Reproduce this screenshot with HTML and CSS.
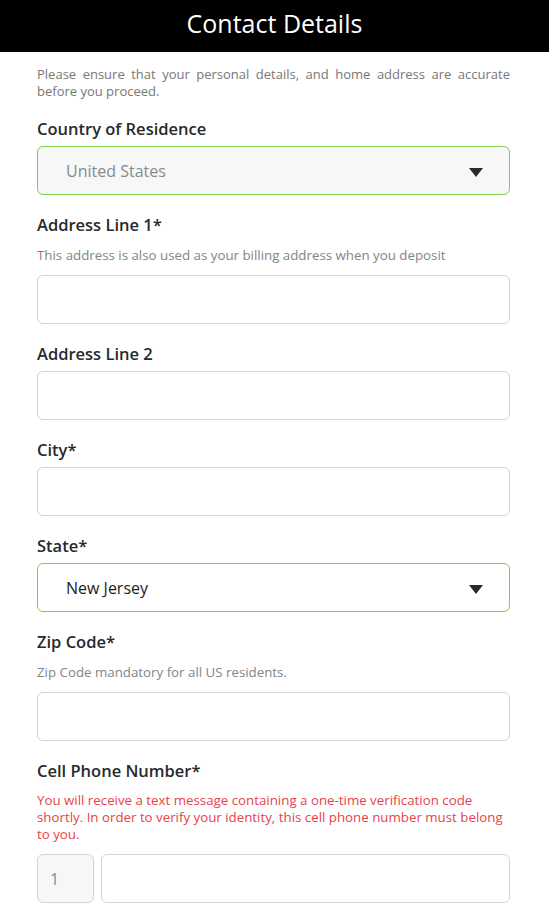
FILE: index.html
```html
<!DOCTYPE html>
<html lang="en">
<head>
  <meta charset="UTF-8" />
  <meta name="viewport" content="width=device-width, initial-scale=1.0" />
  <title>Contact Details</title>
  <link rel="stylesheet" href="styles.css">
</head>
<body>
  <header class="top-bar">
    <h1>Contact Details</h1>
  </header>

  <form class="contact-form">
    <p class="intro">Please ensure that your personal details, and home address are accurate before you proceed.</p>

    <div class="field">
      <label class="field-label">Country of Residence</label>
      <div class="select-box is-valid is-disabled">
        <span class="select-value">United States</span>
        <span class="caret"></span>
      </div>
    </div>

    <div class="field">
      <label class="field-label">Address Line 1*</label>
      <p class="hint">This address is also used as your billing address when you deposit</p>
      <input class="text-input" type="text" />
    </div>

    <div class="field">
      <label class="field-label">Address Line 2</label>
      <input class="text-input" type="text" />
    </div>

    <div class="field">
      <label class="field-label">City*</label>
      <input class="text-input" type="text" />
    </div>

    <div class="field">
      <label class="field-label">State*</label>
      <div class="select-box is-valid">
        <span class="select-value">New Jersey</span>
        <span class="caret"></span>
      </div>
    </div>

    <div class="field">
      <label class="field-label">Zip Code*</label>
      <p class="hint">Zip Code mandatory for all US residents.</p>
      <input class="text-input" type="text" />
    </div>

    <div class="field">
      <label class="field-label">Cell Phone Number*</label>
      <p class="hint warning">You will receive a text message containing a one-time verification code shortly. In order to verify your identity, this cell phone number must belong to you.</p>
      <div class="phone-row">
        <div class="phone-code">1</div>
        <input class="text-input" type="tel" />
      </div>
    </div>
  </form>
</body>
</html>
```

FILE: styles.css
```css
body {
  margin: 0;
  font-family: "Open Sans", "Lato", sans-serif;
  background-color: #ffffff;
  color: #222;
}
.top-bar {
  background: #000;
  height: 52px;
  display: flex;
  align-items: center;
  justify-content: center;
}
.top-bar h1 {
  margin: 0;
  color: #fff;
  font-size: 25px;
  font-weight: 400;
  position: relative;
  top: -3px;
}
.contact-form {
  padding: 0 39px 0 37px;
}
.intro {
  margin: 14px 0 18px;
  font-size: 13px;
  line-height: 17px;
  color: #777;
  text-align: justify;
}
.field { margin-bottom: 19px; }
.field-label {
  display: block;
  font-size: 16.5px;
  line-height: 22px;
  font-weight: 600;
  color: #262a2b;
  margin-bottom: 6px;
}
.hint {
  margin: 10px 0 11px;
  font-size: 13.3px;
  line-height: 18px;
  color: #808688;
}
.hint.warning {
  color: #e8434a;
  line-height: 17px;
}
.text-input, .select-box, .phone-code {
  box-sizing: border-box;
  height: 49px;
  border: 1px solid #d3d3d3;
  border-radius: 6px;
  background: #fff;
}
.text-input {
  display: block;
  width: 100%;
  margin: 0;
  padding: 0 14px;
  font: inherit;
  font-size: 16px;
}
.select-box {
  display: flex;
  align-items: center;
  justify-content: space-between;
  padding: 0 26px 0 28px;
  font-size: 16px;
}
.select-box.is-valid { border-color: #7fcf4a; }
.select-box.is-disabled { background: #f7f7f7; }
.select-box.is-disabled .select-value { color: #858b8e; }
.select-value { color: #222; }
.caret {
  width: 0;
  height: 0;
  border-left: 7.5px solid transparent;
  border-right: 7.5px solid transparent;
  border-top: 9px solid #2b2b2b;
  margin-top: 3px;
}
.phone-row {
  display: flex;
  gap: 7px;
}
.phone-code {
  flex: 0 0 57px;
  display: flex;
  align-items: center;
  padding-left: 12px;
  background: #f7f7f7;
  color: #858b8e;
  font-size: 16px;
}
.phone-row .text-input { flex: 1; }
```
